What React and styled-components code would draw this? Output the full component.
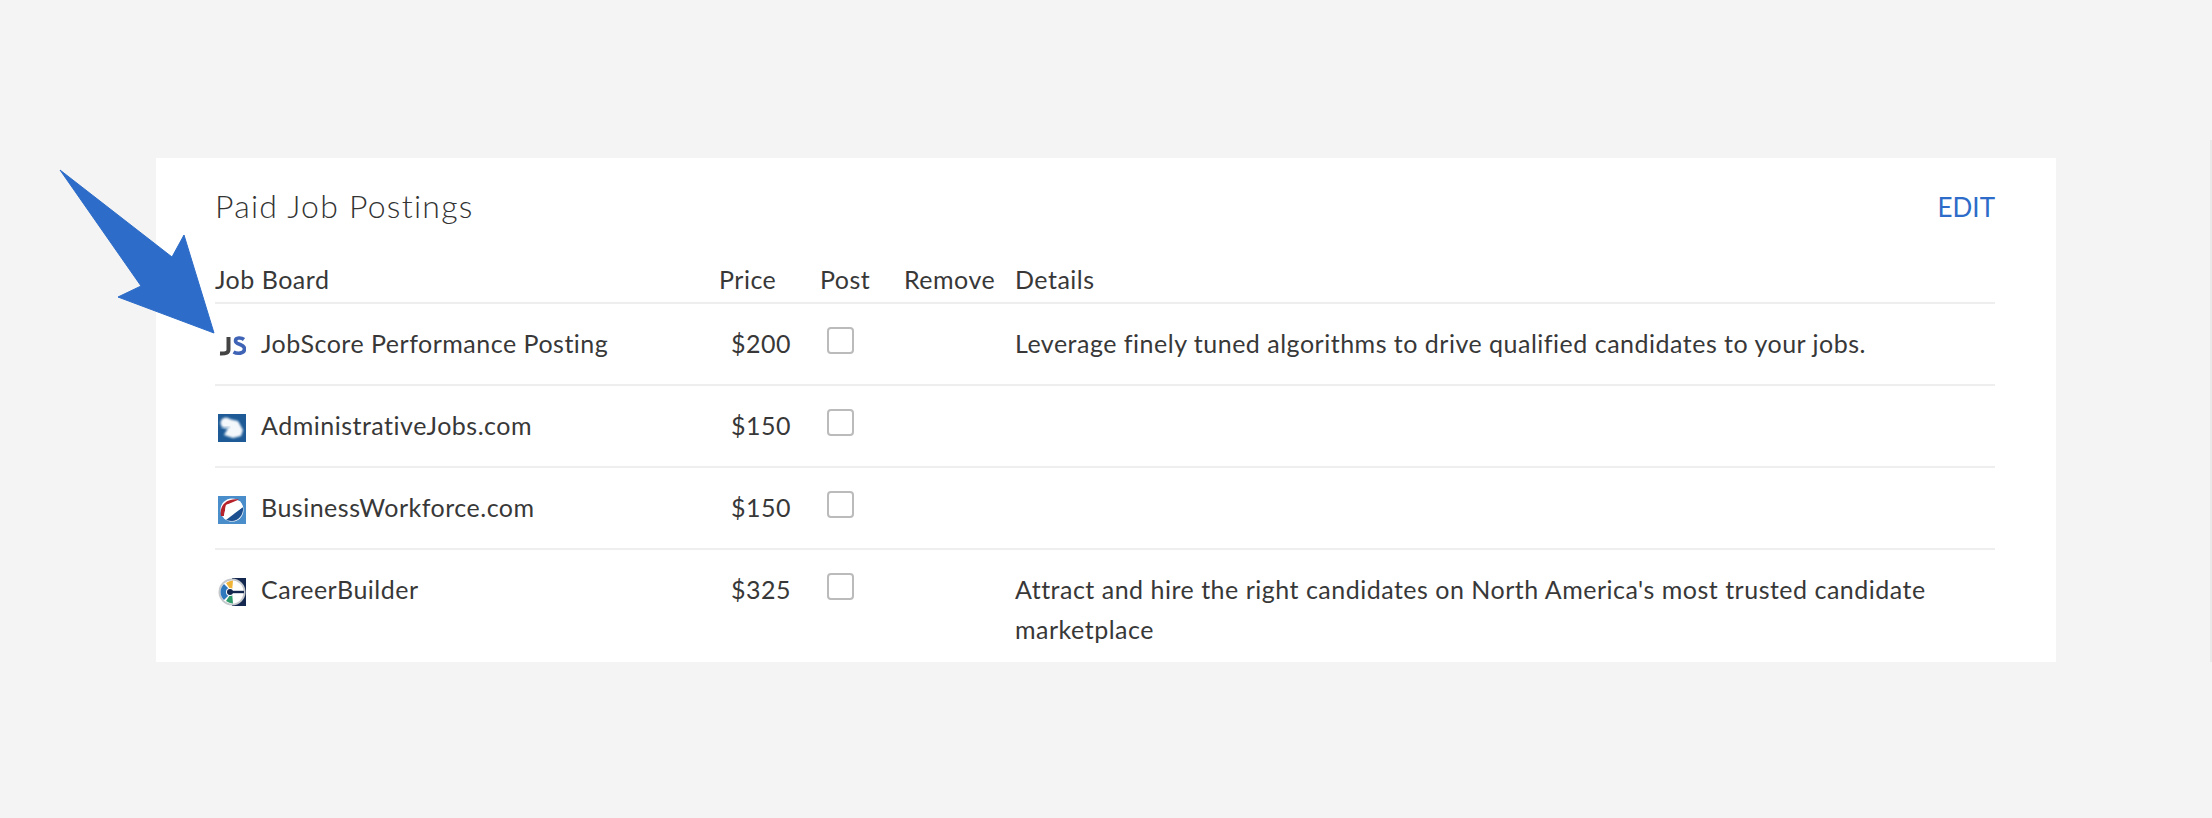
import React from "react";
import styled, { createGlobalStyle } from "styled-components";

const GlobalStyle = createGlobalStyle`
  html, body {
    margin: 0;
    padding: 0;
    background: #f4f4f4;
  }
  body {
    font-family: "Lato", "Liberation Sans", sans-serif;
    color: #333;
  }
`;

const Page = styled.div`
  position: relative;
  width: 2212px;
  height: 818px;
  box-sizing: border-box;
  padding: 158px 0 0 156px;
  overflow: hidden;
`;

const ScrollEdge = styled.div`
  position: absolute;
  top: 140px;
  right: 0;
  width: 2px;
  height: 522px;
  background: #e9e9e9;
`;

const Panel = styled.section`
  width: 1900px;
  height: 504px;
  box-sizing: border-box;
  padding: 24px 61px 0 59px;
  background: #fff;
`;

const PanelHeader = styled.header`
  display: flex;
  justify-content: space-between;
  align-items: center;
  height: 50px;
`;

const Title = styled.h2`
  margin: 0;
  padding-bottom: 4px;
  font-size: 32px;
  font-weight: 300;
  letter-spacing: 1.25px;
  color: #333;
`;

const EditLink = styled.a`
  font-size: 26px;
  color: #2d6cc8;
`;

const Row = styled.div`
  display: grid;
  grid-template-columns: 504px 101px 84px 111px 1fr;
  min-height: ${(p) => (p.$head ? "40px" : "80px")};
  margin-top: ${(p) => (p.$head ? "30px" : "0")};
  border-bottom: ${(p) => (p.$last ? "none" : "2px solid #eeeeee")};
  font-size: 25px;
  letter-spacing: 0.5px;
  line-height: ${(p) => (p.$head ? "34px" : "40px")};
  color: #383838;
`;

const Cell = styled.div`
  padding-top: ${(p) => (p.$head ? "0" : "19px")};
`;

const BoardCell = styled(Cell)`
  display: flex;
  align-items: flex-start;
  gap: 15px;
  padding-left: ${(p) => (p.$head ? "0" : "3px")};
`;

const PriceCell = styled(Cell)`
  padding-right: 29px;
  text-align: ${(p) => (p.$head ? "left" : "right")};
`;

const Logo = styled.svg`
  flex: none;
  width: 28px;
  height: 28px;
  margin-top: 9px;
`;

const CheckCell = styled(Cell)`
  padding-left: 7px;
`;

const Check = styled.span`
  display: block;
  width: 27px;
  height: 27px;
  box-sizing: border-box;
  margin-top: 4px;
  border: 2px solid #bbbbbb;
  border-radius: 4px;
  background: #fff;
`;

const Arrow = styled.svg`
  position: absolute;
  left: 0;
  top: 0;
  pointer-events: none;
`;

const JsLogo = () => (
  <Logo viewBox="0 0 28 28">
    <path d="M10.500 5v12.500c0 3-2 4.200-8.500 4" fill="none" stroke="#444" strokeWidth="4" />
    <path
      d="M26 7.500c-2.500-2-8.500-2.500-8.500 1.500 0 4 9 2.500 9 8 0 5-7.500 5-11 3"
      fill="none"
      stroke="#3f63b5"
      strokeWidth="3.600"
    />
  </Logo>
);

const AdminLogo = () => (
  <Logo viewBox="0 0 28 28">
    <defs>
      <filter id="softA"><feGaussianBlur stdDeviation="0.9" /></filter>
    </defs>
    <rect width="28" height="28" fill="#1d5a96" />
    <g filter="url(#softA)" fill="#f4f8fb">
      <circle cx="8" cy="9" r="5.500" />
      <path d="M11 5l9 2 5 9-2 6-8 2-9-3 3-5 2-4z" />
    </g>
    <path d="M3 14l9-1" stroke="#7fa6c9" strokeWidth="1.200" filter="url(#softA)" />
  </Logo>
);

const BusinessLogo = () => (
  <Logo viewBox="0 0 28 28">
    <defs>
      <filter id="softB"><feGaussianBlur stdDeviation="0.7" /></filter>
    </defs>
    <rect width="28" height="28" fill="#4a8dcb" />
    <g filter="url(#softB)">
      <circle cx="14" cy="14" r="11.500" fill="#fff" />
      <path d="M3 20C1 9 9 2 21 3.500L8 9l-2 11z" fill="#b5202c" />
      <path d="M8 24l17-13c1 8-5 14-11 14-2 0-4-.300-6-1z" fill="#1d4f8f" />
      <path d="M8 9l14-4 3 6-17 11-2-2z" fill="#fff" />
    </g>
  </Logo>
);

const CareerLogo = () => (
  <Logo viewBox="0 0 28 28">
    <defs>
      <filter id="softC"><feGaussianBlur stdDeviation="0.6" /></filter>
    </defs>
    <rect width="28" height="28" fill="#fff" />
    <path d="M14 0h14v28H14z" fill="#14284f" />
    <g filter="url(#softC)">
      <circle cx="14" cy="14" r="13.500" fill="#c4c8cc" />
      <circle cx="14" cy="14" r="11.500" fill="#fff" />
      <path d="M14 14L6 6a11 11 0 0 0 0 16z" fill="#2f78bd" />
      <path d="M14 14L8 5a12 12 0 0 1 7-2.500z" fill="#f0b437" />
      <path d="M14 14l-6 9a12 12 0 0 0 7 2.500z" fill="#2f9a6a" />
      <circle cx="12" cy="14" r="4" fill="#fff" />
    </g>
    <path d="M11 14h15" stroke="#14284f" strokeWidth="2.400" />
    <circle cx="12" cy="14" r="3" fill="#14284f" />
  </Logo>
);

const jobs = [
  {
    name: "JobScore Performance Posting",
    price: "$200",
    logo: <JsLogo />,
    details: "Leverage finely tuned algorithms to drive qualified candidates to your jobs.",
  },
  { name: "AdministrativeJobs.com", price: "$150", logo: <AdminLogo /> },
  { name: "BusinessWorkforce.com", price: "$150", logo: <BusinessLogo /> },
  {
    name: "CareerBuilder",
    price: "$325",
    logo: <CareerLogo />,
    details: "Attract and hire the right candidates on North America's most trusted candidate marketplace",
  },
];

export default function App() {
  return (
    <Page>
      <GlobalStyle />
      <ScrollEdge />
      <Panel>
        <PanelHeader>
          <Title>Paid Job Postings</Title>
          <EditLink>EDIT</EditLink>
        </PanelHeader>
        <Row $head>
          <BoardCell $head>Job Board</BoardCell>
          <PriceCell $head>Price</PriceCell>
          <Cell $head>Post</Cell>
          <Cell $head>Remove</Cell>
          <Cell $head>Details</Cell>
        </Row>
        {jobs.map((job, i) => (
          <Row key={job.name} $last={i === jobs.length - 1}>
            <BoardCell>
              {job.logo}
              {job.name}
            </BoardCell>
            <PriceCell>{job.price}</PriceCell>
            <CheckCell>
              <Check />
            </CheckCell>
            <Cell />
            <Cell>{job.details}</Cell>
          </Row>
        ))}
      </Panel>
      <Arrow width="230" height="345" viewBox="0 0 230 345">
        <path
          d="M60 170L172 257L184 235L214 333L118 297L141 286Z"
          fill="#2d6cc8"
          stroke="#2d6cc8"
          strokeWidth="1"
          strokeLinejoin="round"
        />
      </Arrow>
    </Page>
  );
}
